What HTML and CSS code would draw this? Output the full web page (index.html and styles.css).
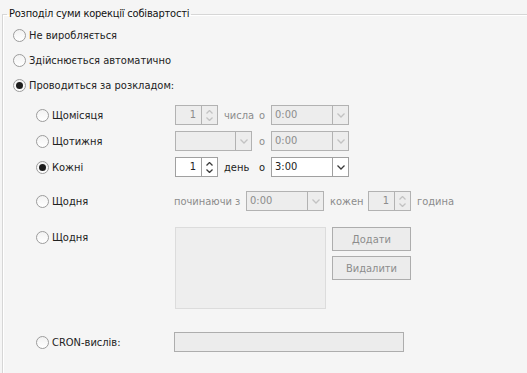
FILE: index.html
```html
<!DOCTYPE html>
<html lang="uk">
<head>
  <meta charset="UTF-8" />
  <title>Розподіл суми корекції собівартості</title>
  <link rel="stylesheet" href="styles.css">
</head>
<body>

  <fieldset class="group">
    <legend>Розподіл суми корекції собівартості</legend>

    <div class="mode-row"><span class="radio"></span>Не виробляється</div>
    <div class="mode-row"><span class="radio"></span>Здійснюється автоматично</div>
    <div class="mode-row"><span class="radio checked"></span>Проводиться за розкладом:</div>

    <div class="schedule">
      <div class="sched-row row-month">
        <div class="opt"><span class="radio"></span>Щомісяця</div>
        <div class="spin disabled"><span class="spin-val">1</span><span class="spin-btns"><svg width="7" height="4" viewBox="0 0 7 4"><polyline points="0.5,3.5 3.5,0.5 6.5,3.5"/></svg><svg width="7" height="4" viewBox="0 0 7 4"><polyline points="0.5,0.5 3.5,3.5 6.5,0.5"/></svg></span></div>
        <span class="word muted">числа</span>
        <span class="at muted">о</span>
        <div class="combo disabled"><span class="combo-val">0:00</span><span class="combo-btn"><svg width="8" height="5" viewBox="0 0 8 5"><polyline points="0.5,0.5 4,4 7.5,0.5"/></svg></span></div>
      </div>

      <div class="sched-row">
        <div class="opt"><span class="radio"></span>Щотижня</div>
        <div class="combo disabled combo-day"><span class="combo-val"></span><span class="combo-btn"><svg width="8" height="5" viewBox="0 0 8 5"><polyline points="0.5,0.5 4,4 7.5,0.5"/></svg></span></div>
        <span class="at muted">о</span>
        <div class="combo disabled"><span class="combo-val">0:00</span><span class="combo-btn"><svg width="8" height="5" viewBox="0 0 8 5"><polyline points="0.5,0.5 4,4 7.5,0.5"/></svg></span></div>
      </div>

      <div class="sched-row">
        <div class="opt"><span class="radio checked"></span>Кожні</div>
        <div class="spin"><span class="spin-val">1</span><span class="spin-btns"><svg width="7" height="4" viewBox="0 0 7 4"><polyline points="0.5,3.5 3.5,0.5 6.5,3.5"/></svg><svg width="7" height="4" viewBox="0 0 7 4"><polyline points="0.5,0.5 3.5,3.5 6.5,0.5"/></svg></span></div>
        <span class="word">день</span>
        <span class="at">о</span>
        <div class="combo"><span class="combo-val">3:00</span><span class="combo-btn"><svg width="8" height="5" viewBox="0 0 8 5"><polyline points="0.5,0.5 4,4 7.5,0.5"/></svg></span></div>
      </div>

      <div class="sched-row row-daily">
        <div class="opt"><span class="radio"></span>Щодня</div>
        <div class="inline shift">
          <span class="muted lbl-from">починаючи з</span>
          <div class="combo disabled"><span class="combo-val">0:00</span><span class="combo-btn"><svg width="8" height="5" viewBox="0 0 8 5"><polyline points="0.5,0.5 4,4 7.5,0.5"/></svg></span></div>
          <span class="muted lbl-each">кожен</span>
          <div class="spin disabled"><span class="spin-val">1</span><span class="spin-btns"><svg width="7" height="4" viewBox="0 0 7 4"><polyline points="0.5,3.5 3.5,0.5 6.5,3.5"/></svg><svg width="7" height="4" viewBox="0 0 7 4"><polyline points="0.5,0.5 3.5,3.5 6.5,0.5"/></svg></span></div>
          <span class="muted lbl-hour">година</span>
        </div>
      </div>

      <div class="sched-row row-list">
        <div class="opt"><span class="radio"></span>Щодня</div>
        <div class="inline top">
          <div class="listbox"></div>
          <div class="btn-col">
            <button class="btn" disabled>Додати</button>
            <button class="btn" disabled>Видалити</button>
          </div>
        </div>
      </div>

      <div class="sched-row row-cron">
        <div class="opt"><span class="radio"></span>CRON-вислів:</div>
        <div class="textbox"></div>
      </div>
    </div>
  </fieldset>

</body>
</html>
```

FILE: styles.css
```css
* {
  box-sizing: border-box;
}

html, body {
  margin: 0;
  height: 100%;
  overflow: hidden;
}

body {
  background: #f5f5f5;
  font-family: 'DejaVu Sans Condensed', 'DejaVu Sans', sans-serif;
  font-stretch: condensed;
  font-size: 11px;
  color: #222;
}

.group {
  margin: 7px 0 0 2px;
  padding: 2px 0 0 10px;
  width: 600px;
  height: 420px;
  border: 1px solid #d6d6d6;
  border-right: none;
  border-bottom: none;
  box-shadow: inset 1px 1px 0 #fff;
}

.group legend {
  margin-left: -6px;
  padding: 0 2px;
  line-height: 14px;
  letter-spacing: -0.2px;
  color: #111;
}

.mode-row {
  display: flex;
  align-items: center;
  height: 25px;
}

.radio {
  display: inline-block;
  flex: none;
  width: 13px;
  height: 13px;
  margin-right: 3px;
  border: 1px solid #9c9c9c;
  border-radius: 50%;
  background: linear-gradient(#f2f2f2, #fff);
  position: relative;
}

.radio.checked::after {
  content: '';
  position: absolute;
  left: 2px;
  top: 2px;
  width: 7px;
  height: 7px;
  border-radius: 50%;
  background: #1e1e1e;
}

.schedule {
  padding: 7px 0 0 23px;
}

.sched-row {
  display: flex;
  align-items: center;
  height: 20px;
  margin-bottom: 6px;
}

.row-daily {
  margin-top: 14px;
  margin-bottom: 16px;
}

.row-list {
  align-items: flex-start;
  height: 82px;
  margin-bottom: 23px;
}

.opt {
  display: flex;
  align-items: center;
  width: 139px;
  height: 20px;
  flex: none;
}

.muted {
  color: #8c8c8c;
}

.word {
  width: 35px;
  margin-left: 6px;
}

.at {
  width: 12px;
}

.combo-day {
  width: 77px !important;
  margin-right: 7px;
}

/* spin edit */
.spin {
  display: flex;
  width: 43px;
  height: 20px;
  border: 1px solid #a0a0a0;
  background: #fff;
  flex: none;
}

.spin-val {
  flex: 1;
  text-align: right;
  padding-right: 5px;
  line-height: 18px;
}

.spin-btns {
  width: 16px;
  border-left: 1px solid #a0a0a0;
  display: flex;
  flex-direction: column;
  align-items: center;
  justify-content: center;
  gap: 3px;
}

.spin-btns svg,
.combo-btn svg {
  fill: none;
  stroke: #3a3a3a;
  stroke-width: 1.3;
}

/* combo box */
.combo {
  display: flex;
  width: 78px;
  height: 20px;
  border: 1px solid #a0a0a0;
  background: #fff;
  flex: none;
}

.combo-val {
  flex: 1;
  padding-left: 3px;
  line-height: 18px;
}

.combo-btn {
  width: 16px;
  border-left: 1px solid #a0a0a0;
  display: flex;
  align-items: center;
  justify-content: center;
}

.disabled {
  background: #ededed;
  border-color: #b2b2b2;
  color: #8c8c8c;
}

.disabled .spin-btns,
.disabled .combo-btn {
  border-color: #b2b2b2;
}

.disabled svg {
  stroke: #c2c2c2;
}

.inline {
  display: flex;
  align-items: center;
  gap: 6px;
}

.inline.top {
  align-items: flex-start;
}

.inline.shift {
  gap: 0;
  margin-left: -1px;
}

.lbl-from {
  width: 72px;
  white-space: nowrap;
}

.lbl-each {
  width: 38px;
  margin-left: 6px;
}

.lbl-hour {
  margin-left: 6px;
}

.listbox {
  width: 151px;
  height: 82px;
  background: #eeeeee;
  border: 1px solid #dcdcdc;
}

.btn-col {
  display: flex;
  flex-direction: column;
  gap: 5px;
}

.btn {
  width: 79px;
  height: 24px;
  padding: 0;
  font-family: inherit;
  font-stretch: inherit;
  font-size: 11px;
  color: #8c8c8c;
  background: #ececec;
  border: 1px solid #adadad;
  border-radius: 0;
}

.textbox {
  width: 230px;
  height: 20px;
  margin-left: -1px;
  background: #ececec;
  border: 1px solid #adadad;
}
```
